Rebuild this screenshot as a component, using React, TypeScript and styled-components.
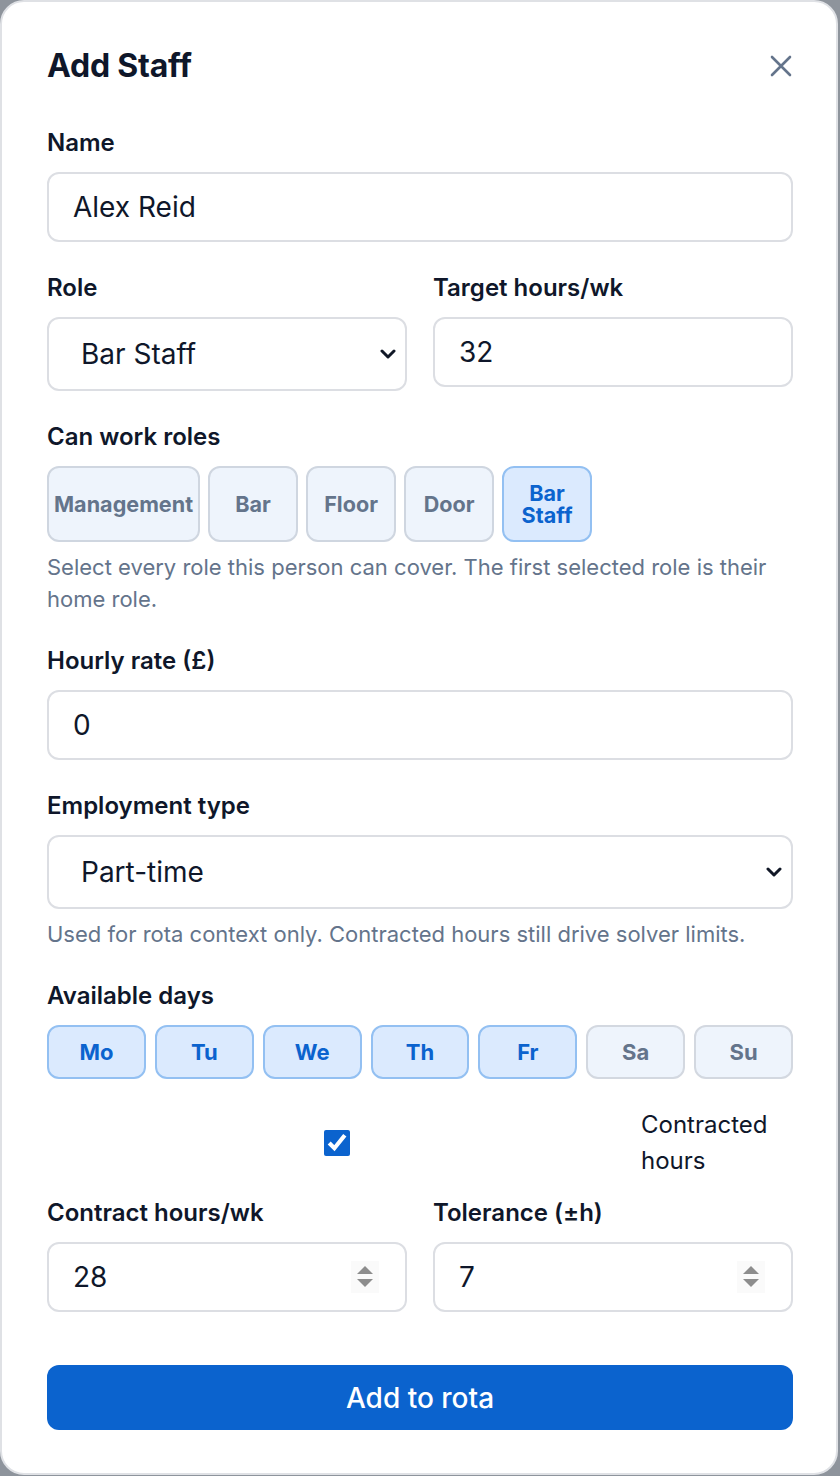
import React, { useState } from 'react';
import styled, { createGlobalStyle } from 'styled-components';

const GlobalStyle = createGlobalStyle`
  html, body {
    margin: 0;
    padding: 0;
    background: #8e949c;
  }
  body {
    font-family: Inter, "Noto Sans", "Liberation Sans", sans-serif;
    color: #0f172a;
  }
  * {
    box-sizing: border-box;
  }
`;

const chevron =
  "url(\"data:image/svg+xml,%3Csvg xmlns='http://www.w3.org/2000/svg' width='16' height='10' viewBox='0 0 16 10'%3E%3Cpath d='M2 2l6 6 6-6' fill='none' stroke='%23111827' stroke-width='3' stroke-linecap='round' stroke-linejoin='round'/%3E%3C/svg%3E\")";

const Card = styled.div`
  width: 838px;
  background: #ffffff;
  border: 2px solid #dfe1e5;
  border-radius: 24px;
  padding: 42px 43px 43px 45px;
`;

const Header = styled.div`
  display: flex;
  align-items: center;
  justify-content: space-between;
  height: 44px;
  margin-bottom: 42px;
`;

const Title = styled.h2`
  margin: 0;
  font-size: 32px;
  font-weight: 700;
  line-height: 44px;
  letter-spacing: -0.2px;
`;

const CloseButton = styled.button`
  display: flex;
  align-items: center;
  justify-content: center;
  width: 36px;
  height: 36px;
  margin-right: -6px;
  padding: 0;
  border: none;
  background: transparent;
  color: #64748b;
  cursor: pointer;
`;

const Form = styled.form`
  display: flex;
  flex-direction: column;
  gap: 33px;
`;

const Field = styled.div`
  display: flex;
  flex-direction: column;
  min-width: 0;
`;

const Label = styled.label`
  font-size: 24px;
  font-weight: 600;
  line-height: 26px;
  margin-bottom: 16px;
  color: #0f172a;
`;

const TextInput = styled.input`
  width: 100%;
  height: 70px;
  padding: 0 24px;
  border: 2px solid #dcdee3;
  border-radius: 12px;
  background: #ffffff;
  font-family: inherit;
  font-size: 28px;
  color: #0f172a;
  outline: none;
  appearance: textfield;

  &::-webkit-inner-spin-button,
  &::-webkit-outer-spin-button {
    -webkit-appearance: none;
    margin: 0;
  }
`;

const NumberWrap = styled.div`
  position: relative;
`;

const Spinner = styled.div`
  position: absolute;
  top: 50%;
  right: 28px;
  width: 28px;
  height: 32px;
  transform: translateY(-50%);
  display: flex;
  align-items: center;
  justify-content: center;
  background: #fafafa;
  pointer-events: none;
`;

const Select = styled.select`
  width: 100%;
  height: 74px;
  padding: 0 40px 0 32px;
  border: 2px solid #dcdee3;
  border-radius: 12px;
  appearance: none;
  background: #ffffff ${chevron} no-repeat right 9px center / 16px 10px;
  font-family: inherit;
  font-size: 28px;
  color: #0f172a;
  outline: none;
`;

const TwoCol = styled.div`
  display: grid;
  grid-template-columns: 1fr 1fr;
  gap: 26px;
  align-items: start;
`;

const ChipRow = styled.div`
  display: flex;
  gap: 8px;
  align-items: stretch;
`;

const Chip = styled.button<{ $active: boolean }>`
  width: min-content;
  min-width: 90px;
  padding: 14px 5px;
  border: 2px solid ${({ $active }) => ($active ? '#93c0f2' : '#cfd6e0')};
  border-radius: 12px;
  background: ${({ $active }) => ($active ? '#dbeafe' : '#eef4fc')};
  color: ${({ $active }) => ($active ? '#0b63ce' : '#64748b')};
  font-family: inherit;
  font-size: 21.6px;
  font-weight: 700;
  line-height: 22px;
  text-align: center;
  cursor: pointer;
`;

const Help = styled.p`
  margin: 9px 0 0;
  font-size: 22px;
  line-height: 32px;
  color: #64748b;
`;

const DayGrid = styled.div`
  display: grid;
  grid-template-columns: repeat(7, 1fr);
  gap: 9px;
`;

const DayChip = styled.button<{ $active: boolean }>`
  height: 54px;
  padding: 0;
  border: 2px solid ${({ $active }) => ($active ? '#93c0f2' : '#d3d8e0')};
  border-radius: 12px;
  background: ${({ $active }) => ($active ? '#dbeafe' : '#eef4fc')};
  color: ${({ $active }) => ($active ? '#0b63ce' : '#64748b')};
  font-family: inherit;
  font-size: 22px;
  font-weight: 700;
  cursor: pointer;
`;

const CheckRow = styled.label`
  display: flex;
  align-items: center;
  gap: 14px;
  margin: -5px 0 -12px;
  cursor: pointer;
`;

const CheckBox = styled.input`
  flex: 1;
  height: 26px;
  margin: 0;
  accent-color: #0b63ce;
`;

const CheckText = styled.span`
  width: 152px;
  font-size: 24px;
  line-height: 36px;
  color: #0f172a;
`;

const SubmitButton = styled.button`
  height: 65px;
  margin-top: 20px;
  border: none;
  border-radius: 12px;
  background: #0b63ce;
  color: #ffffff;
  font-family: inherit;
  font-size: 28px;
  font-weight: 500;
  cursor: pointer;
`;

const SpinIcon: React.FC = () => (
  <svg width="18" height="26" viewBox="0 0 18 26">
    <path d="M9 2 17 10H1Z" fill="#8d8d8d" />
    <path d="M1 15H17L9 23Z" fill="#8d8d8d" />
  </svg>
);

interface NumberFieldProps {
  id: string;
  value: string;
  onChange: (v: string) => void;
}

const NumberField: React.FC<NumberFieldProps> = ({ id, value, onChange }) => (
  <NumberWrap>
    <TextInput id={id} type="number" value={value} onChange={(e) => onChange(e.target.value)} />
    <Spinner>
      <SpinIcon />
    </Spinner>
  </NumberWrap>
);

const roles = ['Management', 'Bar', 'Floor', 'Door', 'Bar Staff'];
const days = ['Mo', 'Tu', 'We', 'Th', 'Fr', 'Sa', 'Su'];

const App: React.FC = () => {
  const [name, setName] = useState('Alex Reid');
  const [target, setTarget] = useState('32');
  const [rate, setRate] = useState('0');
  const [contract, setContract] = useState('28');
  const [tolerance, setTolerance] = useState('7');
  const [contracted, setContracted] = useState(true);
  const [selectedRoles, setSelectedRoles] = useState<string[]>(['Bar Staff']);
  const [selectedDays, setSelectedDays] = useState<string[]>(['Mo', 'Tu', 'We', 'Th', 'Fr']);

  const toggle = (list: string[], value: string) =>
    list.includes(value) ? list.filter((v) => v !== value) : [...list, value];

  return (
    <>
      <GlobalStyle />
      <Card>
        <Header>
          <Title>Add Staff</Title>
          <CloseButton type="button" aria-label="Close">
            <svg width="22" height="22" viewBox="0 0 22 22" fill="none">
              <path d="M2 2 20 20M20 2 2 20" stroke="currentColor" strokeWidth="2.6" strokeLinecap="round" />
            </svg>
          </CloseButton>
        </Header>
        <Form onSubmit={(e) => e.preventDefault()}>
          <Field>
            <Label htmlFor="name">Name</Label>
            <TextInput id="name" value={name} onChange={(e) => setName(e.target.value)} />
          </Field>

          <TwoCol>
            <Field>
              <Label htmlFor="role">Role</Label>
              <Select id="role" defaultValue="Bar Staff">
                {roles.map((r) => (
                  <option key={r}>{r}</option>
                ))}
              </Select>
            </Field>
            <Field>
              <Label htmlFor="target">Target hours/wk</Label>
              <TextInput id="target" value={target} onChange={(e) => setTarget(e.target.value)} />
            </Field>
          </TwoCol>

          <Field>
            <Label as="span">Can work roles</Label>
            <ChipRow>
              {roles.map((r) => (
                <Chip
                  key={r}
                  type="button"
                  $active={selectedRoles.includes(r)}
                  onClick={() => setSelectedRoles(toggle(selectedRoles, r))}
                >
                  {r}
                </Chip>
              ))}
            </ChipRow>
            <Help>
              Select every role this person can cover. The first selected role is their home role.
            </Help>
          </Field>

          <Field>
            <Label htmlFor="rate">Hourly rate (£)</Label>
            <TextInput id="rate" value={rate} onChange={(e) => setRate(e.target.value)} />
          </Field>

          <Field>
            <Label htmlFor="employment">Employment type</Label>
            <Select id="employment" defaultValue="Part-time">
              <option>Full-time</option>
              <option>Part-time</option>
              <option>Casual</option>
            </Select>
            <Help>Used for rota context only. Contracted hours still drive solver limits.</Help>
          </Field>

          <Field>
            <Label as="span">Available days</Label>
            <DayGrid>
              {days.map((d) => (
                <DayChip
                  key={d}
                  type="button"
                  $active={selectedDays.includes(d)}
                  onClick={() => setSelectedDays(toggle(selectedDays, d))}
                >
                  {d}
                </DayChip>
              ))}
            </DayGrid>
          </Field>

          <CheckRow>
            <CheckBox
              type="checkbox"
              checked={contracted}
              onChange={(e) => setContracted(e.target.checked)}
            />
            <CheckText>Contracted hours</CheckText>
          </CheckRow>

          <TwoCol>
            <Field>
              <Label htmlFor="contract">Contract hours/wk</Label>
              <NumberField id="contract" value={contract} onChange={setContract} />
            </Field>
            <Field>
              <Label htmlFor="tolerance">Tolerance (±h)</Label>
              <NumberField id="tolerance" value={tolerance} onChange={setTolerance} />
            </Field>
          </TwoCol>

          <SubmitButton type="submit">Add to rota</SubmitButton>
        </Form>
      </Card>
    </>
  );
};

export default App;
